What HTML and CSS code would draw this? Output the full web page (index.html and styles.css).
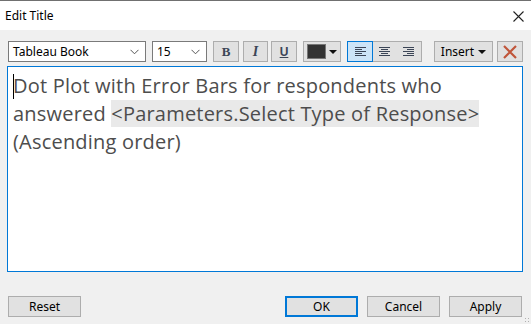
FILE: index.html
```html
<!DOCTYPE html>
<html lang="en">
<head>
  <meta charset="UTF-8">
  <title>Edit Title</title>
  <link rel="stylesheet" href="styles.css">
</head>
<body>

  <div class="titlebar">
    <span class="title">Edit Title</span>
    <svg class="close" width="11" height="11" viewBox="0 0 11 11"><path d="M0.5 0.5L10.5 10.5M10.5 0.5L0.5 10.5" stroke="#222" stroke-width="1.1" fill="none"/></svg>
  </div>

  <div class="toolbar">
    <div class="select font-select">
      <span>Tableau Book</span>
      <svg width="9" height="6" viewBox="0 0 9 6"><path d="M0.5 0.8L4.5 4.8L8.5 0.8" stroke="#555" stroke-width="1" fill="none"/></svg>
    </div>
    <div class="select size-select">
      <span>15</span>
      <svg width="9" height="6" viewBox="0 0 9 6"><path d="M0.5 0.8L4.5 4.8L8.5 0.8" stroke="#555" stroke-width="1" fill="none"/></svg>
    </div>
    <div class="tbtn bold">B</div>
    <div class="tbtn italic">I</div>
    <div class="tbtn under">U</div>
    <div class="tbtn color">
      <span class="swatch"></span>
      <span class="tri"></span>
    </div>
    <div class="align-group">
      <div class="abtn active">
        <svg width="11" height="9" viewBox="0 0 11 9"><path d="M0 0.5H11M0 2.5H7M0 4.5H11M0 6.5H7M0 8.5H11" stroke="#3b4556" stroke-width="1"/></svg>
      </div>
      <div class="abtn">
        <svg width="11" height="9" viewBox="0 0 11 9"><path d="M0 0.5H11M2 2.5H9M0 4.5H11M2 6.5H9M0 8.5H11" stroke="#3b4556" stroke-width="1"/></svg>
      </div>
      <div class="abtn">
        <svg width="11" height="9" viewBox="0 0 11 9"><path d="M0 0.5H11M4 2.5H11M0 4.5H11M4 6.5H11M0 8.5H11" stroke="#3b4556" stroke-width="1"/></svg>
      </div>
    </div>
    <div class="tbtn insert">Insert <span class="tri"></span></div>
    <div class="tbtn clear">
      <svg width="14" height="14" viewBox="0 0 14 14"><path d="M1 1L13 13M13 1L1 13" stroke="#c0553a" stroke-width="2.2" fill="none"/></svg>
    </div>
  </div>

  <div class="editor">
    <p><span class="caret"></span><span>Dot Plot with Error Bars for respondents who</span> <span>answered</span> <span class="field">&lt;Parameters.Select Type of Response&gt;</span> <span>(Ascending order)</span></p>
  </div>

  <div class="footer">
    <button class="btn">Reset</button>
    <div class="right">
      <button class="btn default">OK</button>
      <button class="btn">Cancel</button>
      <button class="btn">Apply</button>
    </div>
  </div>

  <div class="grip"></div>

</body>
</html>
```

FILE: styles.css
```css
body { margin: 0; width: 531px; height: 324px; background-color: #f0f0f0; font-family: 'Noto Sans', 'Liberation Sans', sans-serif; font-size: 12px; color: #000; overflow: hidden; position: relative; }

.titlebar { height: 29px; background: #fff; border-top: 1px solid #707070; display: flex; align-items: center; justify-content: space-between; padding: 0 7px 0 5px; }
.title { font-size: 12px; }
.close { margin-top: 1px; }

.toolbar { display: flex; align-items: center; padding: 11px 0 0 8px; height: 21px; }
.select { box-sizing: border-box; height: 21px; background: #fff; border: 1px solid #7a7a7a; display: flex; align-items: center; justify-content: space-between; padding: 0 6px 0 4px; font-size: 12px; }
.font-select { width: 138px; }
.size-select { width: 55px; margin-left: 6px; }

.tbtn { box-sizing: border-box; height: 21px; width: 26px; background: #e1e1e1; border: 1px solid #adadad; display: flex; align-items: center; justify-content: center; color: #3b4556; }
.bold { margin-left: 6px; font-family: 'Liberation Serif', serif; font-weight: bold; font-size: 13px; }
.italic { margin-left: 4px; width: 25px; font-family: 'Liberation Serif', serif; font-weight: bold; font-style: italic; font-size: 14px; }
.under { margin-left: 3px; font-family: 'Liberation Sans', sans-serif; font-weight: bold; font-size: 12px; text-decoration: underline; }
.color { margin-left: 6px; width: 38px; justify-content: flex-start; padding-left: 3px; }
.swatch { width: 19px; height: 15px; background: #333; border: 1px solid #777; box-sizing: border-box; }
.tri { width: 0; height: 0; border-left: 4px solid transparent; border-right: 4px solid transparent; border-top: 4px solid #111; margin-left: 3px; }

.align-group { margin-left: 6px; display: flex; box-sizing: border-box; height: 21px; width: 75px; background: #e1e1e1; border: 1px solid #adadad; }
.abtn { flex: 1; display: flex; align-items: center; justify-content: center; }
.abtn.active { background: #cce4f7; outline: 1px solid #0078d7; }

.insert { margin-left: 12px; width: 59px; color: #000; font-size: 12px; }
.insert .tri { margin-left: 4px; }
.clear { margin-left: 4px; }

.editor { box-sizing: border-box; margin: 4px 0 0 7px; width: 516px; height: 206px; background: #fff; border: 1px solid #0078d7; padding: 5px 5px; }
.editor p { margin: 0; font-family: 'Open Sans', sans-serif; font-size: 20px; line-height: 28px; letter-spacing: 0.2px; color: #4d4d4d; }
.field { background: #e9e9e9; }
.caret { display: inline-block; width: 1px; height: 25px; background: #000; vertical-align: -6px; margin-right: -1px; }

.footer { display: flex; justify-content: space-between; padding: 24px 9px 0 8px; }
.right { display: flex; gap: 9px; }
.btn { box-sizing: border-box; width: 73px; height: 21px; background: #e1e1e1; border: 1px solid #adadad; font-family: 'Noto Sans', 'Liberation Sans', sans-serif; font-size: 12px; padding: 0; color: #000; }
.btn.default { border: 2px solid #0078d7; }

.grip { position: absolute; right: 1px; bottom: 1px; width: 6px; height: 6px; background: radial-gradient(circle, #b0b0b0 1px, transparent 1px) 0 0 / 3px 3px; }
```
